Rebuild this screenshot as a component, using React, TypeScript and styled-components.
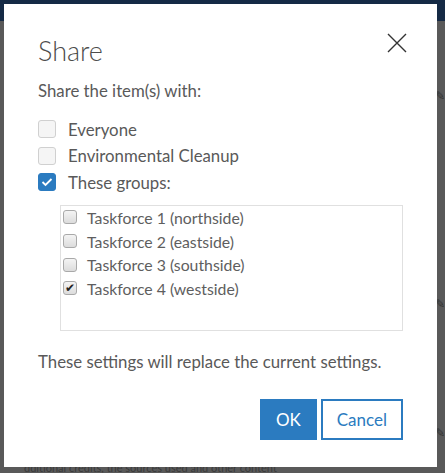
import React from 'react';
import styled, { createGlobalStyle } from 'styled-components';

const GlobalStyle = createGlobalStyle`
  html, body {
    margin: 0;
    padding: 0;
    background: #595959;
  }
  body {
    font-family: Lato, "Open Sans", Arial, sans-serif;
  }
`;

const Page = styled.div`
  position: relative;
  width: 445px;
  height: 473px;
  overflow: hidden;
  background: #595959;
`;

const TopBar = styled.div`
  height: 21px;
  background: #152a45;
`;

const PageText = styled.div`
  position: absolute;
  left: 24px;
  top: 462px;
  color: #3a3a3a;
  font-size: 11px;
  line-height: 11px;
  white-space: nowrap;
`;

const EditMark = styled.span<{ top: number }>`
  position: absolute;
  right: 0;
  top: ${(p) => p.top}px;
  color: #2f2f2f;
  font-size: 12px;
`;

const Dialog = styled.div`
  position: absolute;
  left: 4px;
  top: 4px;
  width: 433px;
  height: 463px;
  box-sizing: border-box;
  background: #fff;
  padding: 30px 34px 0 34px;
  display: flex;
  flex-direction: column;
  color: #595959;
`;

const Header = styled.div`
  display: flex;
  justify-content: space-between;
  align-items: flex-start;
`;

const Title = styled.h2`
  margin: 0;
  font-weight: 300;
  font-size: 27px;
  line-height: 34px;
  color: #4c4c4c;
`;

const CloseButton = styled.button`
  border: 0;
  background: none;
  padding: 0;
  margin: -2px -5px 0 0;
  width: 22px;
  height: 22px;
  cursor: pointer;
`;

const Prompt = styled.p`
  margin: 12px 0 14px;
  font-size: 16.8px;
  line-height: 22px;
`;

const OptionRow = styled.label`
  display: flex;
  align-items: center;
  gap: 12px;
  height: 26.5px;
  font-size: 16.8px;
`;

const Box = styled.span<{ checked?: boolean }>`
  width: 18px;
  height: 18px;
  box-sizing: border-box;
  border-radius: 3px;
  border: 1px solid ${(p) => (p.checked ? '#2b7bc0' : '#d0d0d0')};
  background: ${(p) => (p.checked ? '#2b7bc0' : '#f5f5f5')};
  display: flex;
  align-items: center;
  justify-content: center;
`;

const GroupList = styled.div`
  margin: 9px 0 0 22px;
  width: 343px;
  height: 126px;
  box-sizing: border-box;
  border: 1px solid #e0e0e0;
  padding: 0 0 0 2px;
`;

const GroupRow = styled.label`
  display: flex;
  align-items: center;
  gap: 10px;
  height: 23.7px;
  font-size: 15.8px;
  color: #5e5e5e;
`;

const SmallBox = styled.span`
  width: 14px;
  height: 14px;
  box-sizing: border-box;
  border-radius: 3px;
  border: 1px solid #a9a9a9;
  background: linear-gradient(#f4f4f4, #dcdcdc);
  display: flex;
  align-items: center;
  justify-content: center;
  font-size: 12px;
  line-height: 1;
  color: #222;
`;

const Note = styled.p`
  margin: 20px 0 0;
  font-size: 16.8px;
  line-height: 22px;
`;

const Actions = styled.div`
  display: flex;
  justify-content: flex-end;
  gap: 4px;
  margin-top: 26px;
`;

const Button = styled.button<{ primary?: boolean }>`
  height: 41px;
  box-sizing: border-box;
  padding: 0 14px;
  font-family: inherit;
  font-size: 17px;
  border: 2px solid #2b7bc0;
  background: ${(p) => (p.primary ? '#2b7bc0' : '#fff')};
  color: ${(p) => (p.primary ? '#fff' : '#2b7bc0')};
  cursor: pointer;
`;

const options = [
  { label: 'Everyone', checked: false },
  { label: 'Environmental Cleanup', checked: false },
  { label: 'These groups:', checked: true },
];

const groups = [
  { label: 'Taskforce 1 (northside)', checked: false },
  { label: 'Taskforce 2 (eastside)', checked: false },
  { label: 'Taskforce 3 (southside)', checked: false },
  { label: 'Taskforce 4 (westside)', checked: true },
];

export default function App() {
  return (
    <Page>
      <GlobalStyle />
      <TopBar />
      <EditMark top={88}>✎</EditMark>
      <EditMark top={296}>✎</EditMark>
      <EditMark top={425}>✎</EditMark>
      <PageText>dditional credits, the sources used and other content</PageText>
      <Dialog>
        <Header>
          <Title>Share</Title>
          <CloseButton aria-label="Close">
            <svg width="22" height="22" viewBox="0 0 22 22">
              <path d="M2 2 L20 20 M20 2 L2 20" stroke="#333" strokeWidth="1.4" />
            </svg>
          </CloseButton>
        </Header>
        <Prompt>Share the item(s) with:</Prompt>
        {options.map((o) => (
          <OptionRow key={o.label}>
            <Box checked={o.checked}>
              {o.checked && (
                <svg width="12" height="10" viewBox="0 0 12 10">
                  <path d="M1.5 5 L4.5 8 L10.5 2" stroke="#fff" strokeWidth="1.8" fill="none" />
                </svg>
              )}
            </Box>
            {o.label}
          </OptionRow>
        ))}
        <GroupList>
          {groups.map((g) => (
            <GroupRow key={g.label}>
              <SmallBox>{g.checked ? '✔' : ''}</SmallBox>
              {g.label}
            </GroupRow>
          ))}
        </GroupList>
        <Note>These settings will replace the current settings.</Note>
        <Actions>
          <Button primary>OK</Button>
          <Button>Cancel</Button>
        </Actions>
      </Dialog>
    </Page>
  );
}
